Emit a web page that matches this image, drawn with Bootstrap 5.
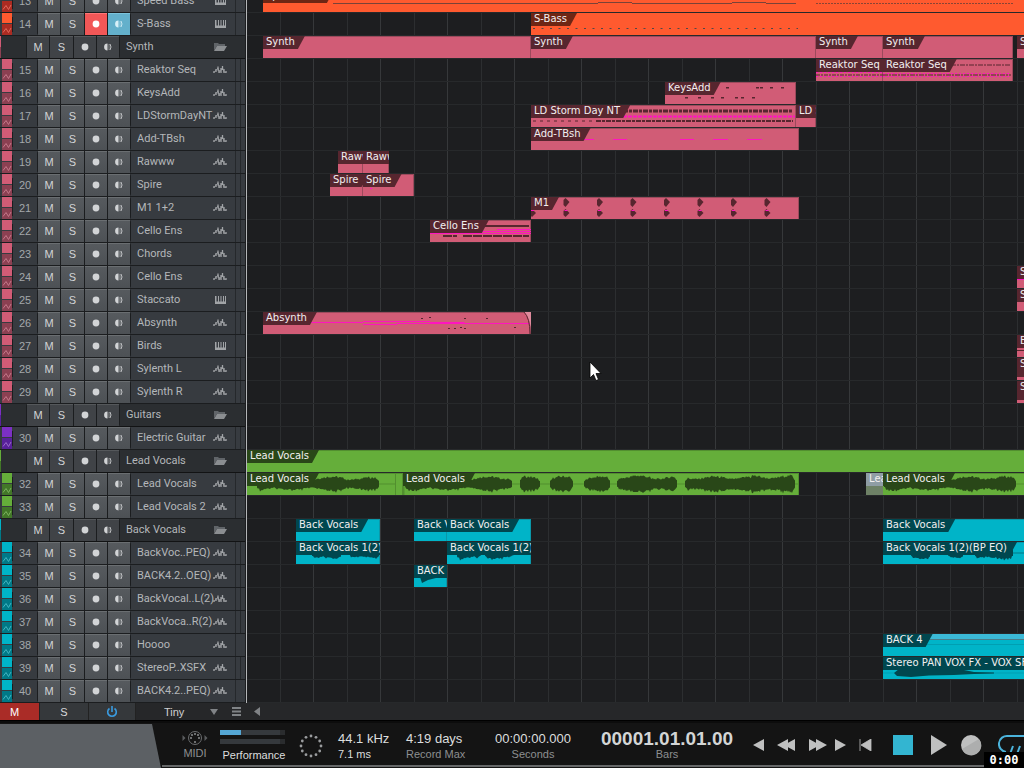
<!DOCTYPE html>
<html lang="en">
<head>
<meta charset="utf-8">
<meta name="viewport" content="width=device-width, initial-scale=1">
<title>Arrangement</title>
<link rel="stylesheet" href="https://cdn.jsdelivr.net/npm/bootstrap@5.3.0/dist/css/bootstrap.min.css">
<style>
  :root { --row: 23px; --rule: #1b1d1f; }
  body { font-family: "Liberation Sans", Arial, sans-serif; font-size: 11px; line-height: 14px; background: #141414; color: #b9bcbf; }
  button, select { font: inherit; color: inherit; border: 0; padding: 0; border-radius: 0; }
  svg { display: block; }

  .arranger { min-height: 0; }
  .scrolled { margin-top: -10px; }
  .track-list { width: 247px; background: #1b1d1f; border-right: 1px solid #b4b6b8; }
  .track { height: var(--row); border-bottom: 1px solid var(--rule); background: #373b40; margin-right: 1px; }
  .folder-row { background: #2b2e31; border-bottom-color: #121314; }
  .chip { width: 10px; margin-left: 2px; flex: none; }
  .chip-top { height: 10px; margin-bottom: 1px; background: var(--c); }
  .chip-low { background: var(--d); color: var(--z); }
  .folder-chip { width: 1px; flex: none; background: linear-gradient(var(--c) 50%, var(--d) 50%); }
  .track-no { width: 25px; flex: none; border-left: 1px solid var(--rule); color: #a4a8ab; padding-bottom: 1px; }
  .btn-set { width: 94px; flex: none; padding: 0 1px; background: var(--rule); gap: 1px; border-radius: 2px; }
  .folder-row .btn-set { margin-left: 25px; }
  .btn-set button { flex: 1 1 0; background: linear-gradient(#565a5e, #4d5155); color: #d2d4d6; border-top: 1px solid #6a6e71; padding-bottom: 2px; }
  .folder-row .btn-set button { background: #404347; border-top-color: #55585b; }
  .btn-set .armed { background: #f25757; color: #fff; border-color: #f77; }
  .btn-set .monitoring { background: #63b0cb; border-color: #7cc3db; color: #d8f0f8; }
  .track-name { margin-left: 6px; min-width: 0; color: #b4b7ba; padding-bottom: 1px; font-family: Roboto, "Liberation Sans", sans-serif; }
  .track-kind { width: 15px; flex: none; color: #a1a4a7; padding-bottom: 1px; }
  .track-end { width: 10px; flex: none; margin-left: 7px; border-left: 1px solid #25282b; }
  .track-end.split { background: linear-gradient(90deg, transparent 4px, #25282b 4px 5px, transparent 5px); }

  .timeline { min-width: 0; background: #1d1e20; }
  .lanes { background:
      linear-gradient(90deg, transparent 33px, #2c2e30 33px 34px, transparent 34px 66px, #36383a 66px 67px) 0 0 / 67px 100%; }
  .lane { height: var(--row); border-bottom: 1px solid #27292b; }
  .clip { position: absolute; top: 0; height: 22px; background: var(--c); overflow: hidden; box-shadow: inset -1px 0 var(--e), inset 0 1px var(--e); }
  .clip-tag { position: relative; width: max-content; height: 13px; padding: 0 10px 0 3px; background: var(--t); color: #f2efef;
      font: 10px/12px "DejaVu Sans", Verdana, sans-serif; white-space: pre;
      clip-path: polygon(0 0, 100% 0, calc(100% - 7px) 100%, 0 100%); }
  .clip svg { position: absolute; left: 0; top: 0; }
  .tall .clip-tag { height: 19px; }
  .orange { --c: #ff5a2f; --d: #ab2b22; --z: #e0695c; --t: #6e2614; --e: #ff5a2f; }
  .pink { --c: #d15c76; --d: #8c4052; --z: #c4788a; --t: #57262f; --e: #9c4a5c; }
  .purple { --c: #7c30c4; --d: #58219a; --z: #9a6acb; --t: #321050; --e: #5c2096; }
  .green { --c: #65ae3a; --d: #427728; --z: #7cb35e; --t: #294718; --e: #528f2f; }
  .cyan { --c: #00b4c8; --d: #007987; --z: #42b5c2; --t: #00474f; --e: #0a98a9; }
  .ghost { --c: #6e8166; --t: #8f9da4; --e: #6e8166; }
  .pointer { position: absolute; left: 342px; top: 361px; z-index: 3; }

  .list-bar { height: 17px; background: #262729; }
  .list-bar button { height: 17px; background: #35383b; color: #d8dadb; border-right: 1px solid #222; }
  .list-bar .mute-all { width: 40px; background: #aa2c27; color: #fff; padding-right: 10px; }
  .list-bar .solo-all { width: 49px; }
  .list-bar .power-all { width: 47px; color: #3a9be0; }
  .size-pick { width: 82px; padding-left: 28px; appearance: none; background: transparent; color: #cfd1d2; outline: 0; }
  .list-bar .plain { width: 21px; background: transparent; border: 0; color: #808386; }

  .transport { height: 48px; border-top: 1px solid #000; background: #141414; box-shadow: inset 0 2px #0c0c0c; }
  .wedge { width: 162px; background: #5c6064; clip-path: polygon(0 3px, 152px 3px, 161px 100%, 0 100%); }
  .readout { border-bottom: 2px solid #666869; padding-top: 9px; margin-bottom: 1px; }
  .dim { color: #8d8f91; }
  .bright { color: #dcdede; }
  .big { font-size: 13px; line-height: 17px; color: #dcdede; }
  .clock { font-size: 19px; line-height: 20px; font-weight: 700; color: #d3d5d5; margin-top: -1px; margin-bottom: -2px; }
  .meter { width: 65px; height: 5px; background: #35393d; border-right: 5px solid #2a2c2e; }
  .meter-fill { height: 5px; width: 35%; background: #54a6d4; }
  .readout button { background: transparent; color: #bfc0c0; }
  .c-midi { width: 50px; } .c-perf { width: 68px; } .c-rate { width: 68px; } .c-rec { width: 85px; } .c-sec { width: 84px; } .c-bars { width: 136px; }
  .keys-row { gap: 8px; padding-bottom: 5px; margin-left: 18px; }
  .timer { position: absolute; right: 0; bottom: 0; width: 40px; height: 16px; background: #000; color: #fff; font: 700 12px/16px "DejaVu Sans Mono", monospace; }
</style>
</head>
<body class="vh-100 overflow-hidden d-flex flex-column position-relative">

<svg width="0" height="0" class="position-absolute" aria-hidden="true">
  <symbol id="i-wave" viewBox="0 0 14 12"><path d="M1 7v2M3 5v3M5 2.500v4M6 6v3M8 4v5M9.500 2v4M11 5v4M13 7v2" stroke="currentColor" stroke-width="1.300" fill="none"/><path d="M1 8.500L5 4l1.500 4.500L9.500 4l1.500 4 2 .5" stroke="currentColor" fill="none" opacity=".7"/></symbol>
  <symbol id="i-keys" viewBox="0 0 14 12"><path d="M2 2h1.500v5.500H5V2h1v5.500h1.500V2h1v5.500H10V2h1v5.500h1V2h1v8H2z" fill="currentColor"/></symbol>
  <symbol id="i-folder" viewBox="0 0 14 12"><path d="M1 2h4l1 1h6v2H4L1 9.500z" fill="#606468"/><path d="M4 5h10l-3 5H1z" fill="#8b8e91"/></symbol>
  <symbol id="i-dot" viewBox="0 0 10 10"><circle cx="5" cy="5" r="3.400" fill="currentColor"/></symbol>
  <symbol id="i-mon" viewBox="0 0 10 10"><path d="M4.500 1.600a3.400 3.400 0 0 0 0 6.800z" fill="currentColor"/><path d="M6 2v6" stroke="currentColor" stroke-width=".8" opacity=".6"/><path d="M7 2q2 3 0 6" stroke="currentColor" stroke-width="1" fill="none" opacity=".85"/></symbol>
  <symbol id="i-zig" viewBox="0 0 10 11"><path d="M1 8.500l3-4 2.500 4L9 4" stroke="currentColor" fill="none"/></symbol>
</svg>

<main class="arranger d-flex flex-grow-1 overflow-hidden">
  <section class="track-list flex-shrink-0" aria-label="Tracks"><div class="scrolled" id="tracks"></div></section>
  <section class="timeline flex-grow-1 position-relative" aria-label="Timeline">
    <div class="scrolled lanes" id="lanes"></div>
    <svg class="pointer" width="13" height="20" viewBox="0 0 13 20"><path d="M1 1v16l3.500-3.500 2.500 6 2.500-1L7 12.500h5z" fill="#fff" stroke="#000" stroke-width=".8"/></svg>
  </section>
</main>

<div class="list-bar d-flex align-items-center flex-shrink-0">
  <button class="mute-all">M</button><button class="solo-all">S</button>
  <button class="power-all d-flex align-items-center justify-content-center" aria-label="Power"><svg width="12" height="12" viewBox="0 0 12 12"><path d="M3.500 2.500a4.300 4.300 0 1 0 5 0M6 0v6" fill="none" stroke="currentColor" stroke-width="1.600"/></svg></button>
  <div class="position-relative d-flex align-items-center">
    <select class="size-pick" aria-label="Track height"><option>Tiny</option><option>Small</option><option>Normal</option></select>
    <svg class="position-absolute end-0" width="8" height="6"><path d="M0 0h8L4 6z" fill="#808386"/></svg>
  </div>
  <button class="plain ms-2 d-flex align-items-center justify-content-center" aria-label="List"><svg width="9" height="9"><path d="M0 1h9M0 4.500h9M0 8h9" stroke="currentColor" stroke-width="2"/></svg></button>
  <button class="plain d-flex align-items-center justify-content-center" aria-label="Scroll left"><svg width="7" height="9"><path d="M6 0v9L0 4.500z" fill="currentColor"/></svg></button>
</div>

<footer class="transport d-flex flex-shrink-0">
  <div class="wedge flex-shrink-0"></div>
  <div class="readout flex-grow-1 d-flex overflow-hidden">
    <div class="c-midi d-flex flex-column align-items-center ms-2 dim flex-shrink-0">
      <svg width="28" height="16" viewBox="0 0 28 16" fill="none" stroke="#6a6c6e"><circle cx="14" cy="8" r="6.500"/><path d="M1.500 5v6l3-3zM23.500 5v6l3-3z" fill="#5a5c5e" stroke="none"/><g fill="#8a8c8e" stroke="none"><circle cx="10" cy="8" r="1"/><circle cx="11" cy="5" r="1"/><circle cx="14" cy="4" r="1"/><circle cx="17" cy="5" r="1"/><circle cx="18" cy="8" r="1"/><circle cx="14" cy="12" r="1"/></g></svg>
      <span>MIDI</span>
    </div>
    <div class="c-perf flex-shrink-0">
      <div class="meter mb-0"><div class="meter-fill"></div></div>
      <div class="meter mt-1 mb-1"></div>
      <div class="text-center bright">Performance</div>
    </div>
    <svg class="mt-1 ms-2 me-2 flex-shrink-0" width="30" height="26" viewBox="0 0 30 26" id="dial"></svg>
    <div class="c-rate ms-1 flex-shrink-0"><div class="big">44.1 kHz</div><div class="bright">7.1 ms</div></div>
    <div class="c-rec flex-shrink-0"><div class="big">4:19 days</div><div class="dim">Record Max</div></div>
    <div class="c-sec text-center flex-shrink-0"><div class="big">00:00:00.000</div><div class="dim">Seconds</div></div>
    <div class="c-bars text-center ms-4 flex-shrink-0"><div class="clock">00001.01.01.00</div><div class="dim">Bars</div></div>
    <div class="keys-row d-flex align-items-center flex-shrink-0">
      <button aria-label="Back"><svg width="12" height="12"><path d="M11 0v12L0 6z" fill="currentColor"/></svg></button>
      <button class="ms-1" aria-label="Rewind"><svg width="19" height="12"><path d="M11 0v12L0 6zM18 0v12L7 6z" fill="currentColor"/></svg></button>
      <button class="ms-1" aria-label="Fast forward"><svg width="19" height="12"><path d="M1 0v12l11-6zM8 0v12l11-6z" fill="currentColor"/></svg></button>
      <button aria-label="Forward"><svg width="12" height="12"><path d="M0 0v12l11-6z" fill="currentColor"/></svg></button>
      <button class="ms-1 me-1" aria-label="Return to start"><svg width="13" height="12"><path d="M1 0v12M12 0v12L2 6z" fill="currentColor" stroke="currentColor" stroke-width=".8"/></svg></button>
      <button class="ms-2" aria-label="Stop"><svg width="22" height="22"><path d="M1 1h20v20H1z" fill="#33b5d1"/></svg></button>
      <button class="ms-2" aria-label="Play"><svg width="18" height="20"><path d="M1 0v20l16-10z" fill="currentColor"/></svg></button>
      <button class="ms-1" aria-label="Record"><svg width="22" height="22"><circle cx="11" cy="11" r="10" fill="currentColor"/><path d="M2 15L19 5a10 10 0 1 1-17 10z" fill="#adaeae"/></svg></button>
      <button class="ms-2" aria-label="Loop"><svg width="40" height="22" viewBox="0 0 40 22" fill="none" stroke="#4bb4dc" stroke-width="2"><path d="M8 18a8 8 0 0 1 2-16h20a8 8 0 0 1 2 16M12 20l3-8M19 20l3-8"/></svg></button>
    </div>
  </div>
</footer>
<div class="timer text-center">0:00</div>

<script>
const N = (no, name, color, kind = 'wave', split = true) => ({ no, name, color, kind, split });
const F = (name, color) => ({ name, color, folder: true });
const tracks = [
  N(13, 'Speed Bass', 'orange', 'keys', false), N(14, 'S-Bass', 'orange', 'keys', false), F('Synth', 'pink'),
  N(15, 'Reaktor Seq', 'pink'), N(16, 'KeysAdd', 'pink'), N(17, 'LDStormDayNT', 'pink'), N(18, 'Add-TBsh', 'pink'),
  N(19, 'Rawww', 'pink'), N(20, 'Spire', 'pink'), N(21, 'M1 1+2', 'pink'), N(22, 'Cello Ens', 'pink'),
  N(23, 'Chords', 'pink'), N(24, 'Cello Ens', 'pink'), N(25, 'Staccato', 'pink', 'keys', false), N(26, 'Absynth', 'pink'),
  N(27, 'Birds', 'pink', 'keys', false), N(28, 'Sylenth L', 'pink'), N(29, 'Sylenth R', 'pink'), F('Guitars', 'purple'),
  N(30, 'Electric Guitar', 'purple'), F('Lead Vocals', 'green'), N(32, 'Lead Vocals', 'green', 'wave', false),
  N(33, 'Lead Vocals 2', 'green', 'wave', false), F('Back Vocals', 'cyan'), N(34, 'BackVoc..PEQ)', 'cyan'),
  N(35, 'BACK4.2..OEQ)', 'cyan'), N(36, 'BackVocal..L(2)', 'cyan'), N(37, 'BackVoca..R(2)', 'cyan'),
  N(38, 'Hoooo', 'cyan', 'wave', false), N(39, 'StereoP..XSFX', 'cyan'), N(40, 'BACK4.2..PEQ)', 'cyan', 'wave', false)
];
const use = (id, w, h) => `<svg width="${w}" height="${h}" aria-hidden="true"><use href="#i-${id}"/></svg>`;

document.getElementById('tracks').innerHTML = tracks.map(t => {
  const hot = t.no === 14, center = 'd-flex align-items-center justify-content-center';
  const buttons = `<div class="btn-set d-flex align-self-stretch">
    <button class="${center}">M</button><button class="${center}">S</button>
    <button class="${center} ${hot ? 'armed' : ''}" aria-label="Record">${use('dot', 10, 10)}</button>
    <button class="${center} ${hot ? 'monitoring' : ''}" aria-label="Monitor">${use('mon', 10, 10)}</button></div>`;
  const head = t.folder ? `<div class="folder-chip align-self-stretch"></div>`
    : `<div class="chip align-self-stretch d-flex flex-column"><div class="chip-top"></div><div class="chip-low flex-fill">${use('zig', 10, 11)}</div></div><div class="track-no text-center">${t.no}</div>`;
  return `<div class="track ${t.color} ${t.folder ? 'folder-row' : ''} d-flex align-items-center">${head}${buttons}
    <div class="track-name flex-grow-1 text-nowrap">${t.name}</div><div class="track-kind">${use(t.folder ? 'folder' : t.kind, 14, 12)}</div>
    <div class="${t.folder ? 'track-end border-0' : 'track-end' + (t.split ? ' split' : '')} align-self-stretch"></div></div>`;
}).join('');

/* clip artwork: every helper returns SVG in clip coordinates */
const rnd = i => { const v = Math.sin(i * 12.9898) * 43758.5453; return v - Math.floor(v); };
const wave = (a, b, mid, amp, color) => {
  let up = '', down = '';
  for (let x = a; x <= b; x++) {
    const edge = Math.min(1, (x - a + 3) / 6, (b - x + 3) / 6);
    const h = amp * edge * (0.82 + 0.16 * Math.sin(x / 6)) * (0.78 + 0.32 * rnd(x));
    up += `L${x} ${(mid - h).toFixed(1)}`;
    down = `L${x} ${(mid + h * (0.8 + 0.3 * rnd(x + 7))).toFixed(1)}` + down;
  }
  return `<path d="M${a} ${mid}${up}${down}z" fill="${color}"/>`;
};
const line = (d, color, dash = '', w = 1) => `<path d="${d}" stroke="${color}" stroke-width="${w}" stroke-dasharray="${dash}" fill="none"/>`;
const hits = (xs, y, color) => xs.map(x => `<rect x="${x}" y="${y}" width="3" height="1.5" fill="${color}"/>`).join('');
const P = '#57262f', G = '#294718', C = '#00474f', MG = '#ff14c0', OG = '#6b4540';
const drum = Array.from({ length: 8 }, (_, i) => {
  const x = i * 33.5 - 1;
  return `<path d="M${x} 3l2-2 4 4-4 5-2-2zM${x} 14l2-2 4 4-4 4-2-2z" fill="${P}"/><rect x="${x + 1}" y="13" width="3" height="1" fill="${MG}"/>`;
}).join('');

/* lane index, start x, end x, label, colour, artwork, extra class */
const END = 1400, ORIGIN = 247;
const clips = [
  [0, 263, END, 'Speed Bass', 'orange', line('M70 13.500H335M335 12.500h34M369 13.500h100M469 12.500h34M503 13.500h30', '#7a4238') + line('M553 13.500h198', '#8a4434', '2 1')],
  [1, 531, END, 'S-Bass', 'orange', line('M2 15.500h265', '#504848', '2 6.500')],
  [2, 263, 531, 'Synth', 'pink'], [2, 531, 816, 'Synth', 'pink'], [2, 816, 883, 'Synth', 'pink'], [2, 883, 1013, 'Synth', 'pink'], [2, 1017, END, 'Synth', 'pink'],
  [3, 816, 883, 'Reaktor Seq', 'pink', line('M0 13.500h67M0 17.500h67', MG, '2 2') + line('M0 16h67', P, '4 1 2 1')],
  [3, 883, 1013, 'Reaktor Seq', 'pink', line('M0 14.500h128M0 17.500h128', MG, '2 2') + line('M0 16h128M68 6h60', P, '5 1 2 1')],
  [4, 665, 796, 'KeysAdd', 'pink', hits([61, 91, 95, 105, 116], 5, P) + hits([20, 33, 46, 56, 70, 76, 87], 15, P)],
  [5, 531, 796, 'LD Storm Day NT', 'pink', line('M92 6h170', P, '5 1 3 1', 3) + line('M92 11.500h172', MG, '4 1', 2) + line('M2 16h60', P, '3 4') + line('M65 16h197', P, '5 1 3 1', 2)],
  [5, 796, 816, 'LD Storm', 'pink'],
  [6, 531, 799, 'Add-TBsh', 'pink', line('M53 11.500h10M82 11.500h14M149 11.500h14M182 11.500h15M216 11.500h15', MG)],
  [7, 338, 363, 'Rawww', 'pink'], [7, 363, 389, 'Rawww', 'pink'],
  [8, 330, 363, 'Spire', 'pink'], [8, 363, 414, 'Spire', 'pink', line('M7 14.500h2', MG)],
  [9, 531, 799, 'M1', 'pink', drum],
  [10, 430, 531, 'Cello Ens', 'pink', line('M55 6h44', P, '', 2) + line('M0 13.500h101M52 11.500h49M67 9.500h34', MG) + line('M13 16h14M33 16h66', P, '9 1', 2)],
  [12, 1017, END, 'Sus', 'pink', line('M0 13.500h90', MG)], [13, 1017, END, 'Sta', 'pink'],
  [14, 263, 531, 'Absynth', 'pink', line('M45 10.500h55M100 9.500h67M100 12.500h34v-1h67v-1M167 10.500h34v1h34M235 11.500h33', MG) + line('M158 6.500h2M166 5.500h2M201 6.500h2M223 6.500h2M185 16.500h2M191 16.500h2M197 15.500h2M201 16.500h2M251 15.500h2', P) + '<path d="M261 0q7 6 7 22V0z" fill="#e08a9c"/>' + line('M261 0q6 6 6 22', P)],
  [15, 1017, END, 'Birds', 'pink', line('M0 15.500h90', P)], [16, 1017, END, 'Syl', 'pink', '', 'tall'], [17, 1017, END, 'Syl', 'pink', '', 'tall'],
  [20, 247, END, 'Lead Vocals', 'green'],
  [21, 247, 396, 'Lead Vocals', 'green', line('M0 11h149', '#528f2f') + wave(10, 70, 11, 7, G) + wave(66, 101, 11, 8, G) + wave(98, 132, 11, 7, G)],
  [21, 396, 403, '', 'green'],
  [21, 403, 799, 'Lead Vocals', 'green', line('M0 11h396', '#528f2f') + line('M0 0v22', '#528f2f', '', 3) + wave(2, 72, 11, 7, G) + wave(68, 109, 11, 8, G) + wave(117, 137, 11, 8, G) + wave(147, 170, 11, 8, G) + wave(181, 207, 11, 8, G) + wave(214, 250, 11, 9, G) + wave(246, 274, 11, 8, G) + wave(282, 322, 11, 8, G) + wave(317, 350, 11, 8, G) + wave(346, 392, 11, 9, G)],
  [21, 866, 883, 'Lead', 'ghost'],
  [21, 883, END, 'Lead Vocals', 'green', line('M0 11h200', '#528f2f') + wave(1, 75, 11, 7, G) + wave(70, 133, 11, 8, G)],
  [23, 296, 380, 'Back Vocals', 'cyan'], [23, 414, 447, 'Back Vocals', 'cyan'], [23, 447, 531, 'Back Vocals', 'cyan'], [23, 883, END, 'Back Vocals', 'cyan'],
  [24, 296, 380, 'Back Vocals 1(2)', 'cyan', wave(16, 45, 11, 7, C) + wave(54, 83, 11, 7, C)],
  [24, 447, 531, 'Back Vocals 1(2)', 'cyan', wave(10, 34, 11, 7, C) + wave(38, 67, 11, 7, C)],
  [24, 883, END, 'Back Vocals 1(2)(BP EQ)', 'cyan', line('M0 11h200', '#007987') + wave(28, 47, 12, 6, C) + wave(65, 80, 12, 6, C) + wave(92, 130, 11, 7, C)],
  [25, 414, 447, 'BACK 4', 'cyan', '<path d="M6 12l2 6 6-3 8-2 8-2H6z" fill="#00474f"/>'],
  [28, 883, END, 'BACK 4', 'cyan', '<path d="M0 0h500v5H0z" fill="#3bb9d6"/>' + line('M0 5.500h500', '#4a7c88') + line('M0 10.500h500', '#009fb2')],
  [29, 883, END, 'Stereo PAN VOX FX - VOX SFX', 'cyan', line('M0 16h200', '#009fb2') + '<path d="M11 16l5-4h60l15 3 20 .5v1l-20 .5-20 1-25 .5-18 1.500-14-1z" fill="#00474f"/>']
];
document.getElementById('lanes').innerHTML = tracks.map((_, i) => `<div class="lane position-relative overflow-hidden">` +
  clips.filter(c => c[0] === i).map(([, a, b, label, color, art = '', extra = '']) =>
    `<div class="clip ${color} ${extra}" style="left:${a - ORIGIN}px;width:${b - a}px">${art ? `<svg width="${b - a}" height="22" aria-hidden="true">${art}</svg>` : ''}${label ? `<div class="clip-tag">${label}</div>` : ''}</div>`).join('') + '</div>').join('');

document.getElementById('dial').innerHTML = Array.from({ length: 12 }, (_, i) =>
  `<circle cx="${(15 + 10 * Math.cos(i * Math.PI / 6)).toFixed(1)}" cy="${(12 + 10 * Math.sin(i * Math.PI / 6)).toFixed(1)}" r="1.4" fill="#9a9c9e"/>`).join('');
</script>
<script src="https://cdn.jsdelivr.net/npm/bootstrap@5.3.0/dist/js/bootstrap.bundle.min.js"></script>
</body>
</html>
